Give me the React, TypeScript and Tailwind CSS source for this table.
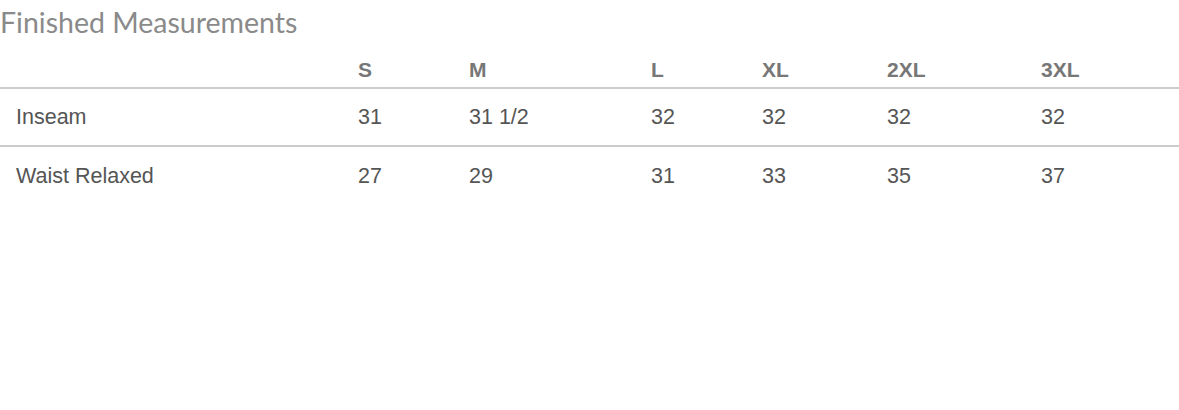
const sizes = ["S", "M", "L", "XL", "2XL", "3XL"];

const rows = [
  { label: "Inseam", values: ["31", "31 1/2", "32", "32", "32", "32"] },
  { label: "Waist Relaxed", values: ["27", "29", "31", "33", "35", "37"] },
];

const cols = "grid grid-cols-[342px_111px_182px_111px_125px_154px_1fr] pl-4";

export default function App() {
  return (
    <div className="w-[1179px] h-[410px] bg-white font-[family-name:'Liberation_Sans',Arial,sans-serif]">
      <div className="h-[44px] pt-[6px]">
        <h2 className="font-[family-name:Lato,sans-serif] text-[28.5px] leading-[32px] text-[#8a8a8a]">
          Finished Measurements
        </h2>
      </div>
      <div className={`${cols} h-[45px] items-end pb-[5px] border-b-2 border-[#cccccc]`}>
        <div />
        {sizes.map((s) => (
          <div key={s} className="text-[21px] leading-[24px] font-bold text-[#777777]">
            {s}
          </div>
        ))}
      </div>
      {rows.map((r, i) => (
        <div
          key={r.label}
          className={`${cols} h-[58px] items-center ${i === 0 ? "border-b-2 border-[#cccccc]" : ""}`}
        >
          <div className="text-[21.5px] leading-[24px] text-[#555555]">{r.label}</div>
          {r.values.map((v, j) => (
            <div key={j} className="text-[21.5px] leading-[24px] text-[#555555]">
              {v}
            </div>
          ))}
        </div>
      ))}
    </div>
  );
}
